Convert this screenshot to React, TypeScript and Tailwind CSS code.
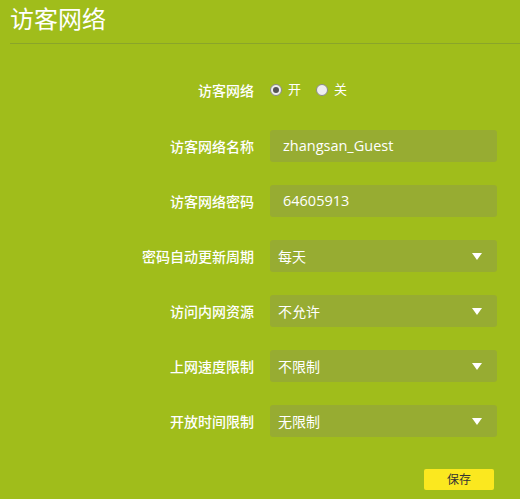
import React from "react";

const font = { fontFamily: '"Open Sans", "Noto Sans CJK SC", sans-serif' };

const Label = ({ children }: { children: React.ReactNode }) => (
  <div className="w-[254px] shrink-0 text-right text-[14px] font-medium text-white">
    {children}
  </div>
);

const Radio = ({ checked, label }: { checked?: boolean; label: string }) => (
  <label className="flex items-center gap-[6px] text-[13px] text-white">
    <span className="flex h-[12px] w-[12px] items-center justify-center rounded-full border border-[#8a8a8a] bg-[#eeeeee]">
      {checked && <span className="h-[6px] w-[6px] rounded-full bg-[#555555]" />}
    </span>
    {label}
  </label>
);

const TextRow = ({ label, value }: { label: string; value: string }) => (
  <div className="flex h-[32px] items-center">
    <Label>{label}</Label>
    <div className="ml-[16px] flex h-[32px] w-[227px] items-center rounded-[3px] bg-[#97ac32] px-[13px] text-[14.5px] text-white">
      {value}
    </div>
  </div>
);

const SelectRow = ({ label, value }: { label: string; value: string }) => (
  <div className="flex h-[32px] items-center">
    <Label>{label}</Label>
    <div className="ml-[16px] flex h-[32px] w-[227px] items-center justify-between rounded-[3px] bg-[#97ac32] pl-[8px] pr-[15px] text-[14px] text-white">
      <span>{value}</span>
      <svg width="10" height="7" viewBox="0 0 10 7">
        <path d="M0 0 H10 L5 7 Z" fill="#ffffff" />
      </svg>
    </div>
  </div>
);

export default function App() {
  return (
    <div className="h-[499px] w-[520px] overflow-hidden bg-[#a0bd1b]" style={font}>
      <div className="pl-[10px]">
        <h1 className="pt-[3px] text-[24px] leading-[32px] text-white">访客网络</h1>
        <div className="mt-[8px] h-px bg-[#8aa52a]" />
      </div>
      <div className="mt-[36px] flex flex-col">
        <div className="flex h-[20px] items-center">
          <Label>访客网络</Label>
          <div className="ml-[16px] flex items-center gap-[15px]">
            <Radio checked label="开" />
            <Radio label="关" />
          </div>
        </div>
        <div className="mt-[30px] flex flex-col gap-[23px]">
          <TextRow label="访客网络名称" value="zhangsan_Guest" />
          <TextRow label="访客网络密码" value="64605913" />
          <SelectRow label="密码自动更新周期" value="每天" />
          <SelectRow label="访问内网资源" value="不允许" />
          <SelectRow label="上网速度限制" value="不限制" />
          <SelectRow label="开放时间限制" value="无限制" />
        </div>
        <div className="mt-[32px] flex justify-end pr-[26px]">
          <button className="h-[21px] w-[70px] rounded-[2px] bg-[#fbe81f] text-[12px] text-[#333333]">
            保存
          </button>
        </div>
      </div>
    </div>
  );
}
